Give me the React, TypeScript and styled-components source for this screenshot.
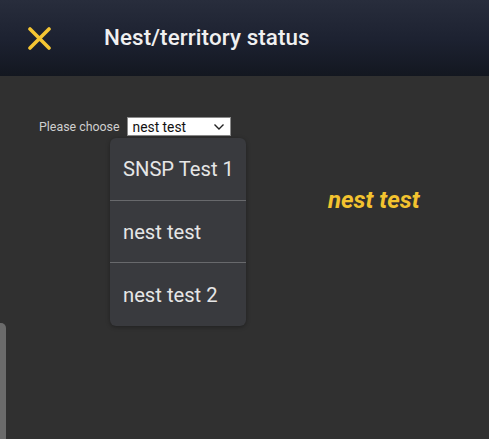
import React from "react";
import styled, { createGlobalStyle } from "styled-components";

const Global = createGlobalStyle`
  html, body { margin: 0; padding: 0; background: #303030; }
  body { font-family: Roboto, "Liberation Sans", sans-serif; }
  #root { min-height: 439px; }
`;

const Page = styled.div`
  position: relative;
  width: 489px;
  height: 439px;
  background: #303030;
  overflow: hidden;
`;

const Header = styled.header`
  height: 76px;
  display: flex;
  align-items: center;
  background: linear-gradient(180deg, #282d3c 0%, #1c2130 55%, #131720 100%);
  padding-left: 26px;
  box-sizing: border-box;
`;

const CloseButton = styled.button`
  width: 26px;
  height: 26px;
  padding: 0;
  border: 0;
  background: none;
  display: flex;
  align-items: center;
  justify-content: center;
`;

const Title = styled.h1`
  margin: -2px 0 0 52px;
  font-size: 22.4px;
  font-weight: 500;
  color: #f0f0f0;
  letter-spacing: 0.1px;
`;

const Body = styled.main`
  position: relative;
  padding: 41px 0 0 39px;
`;

const FormRow = styled.div`
  display: flex;
  align-items: center;
  gap: 7px;
  height: 19px;
`;

const Label = styled.span`
  font-size: 12.4px;
  color: #cfcfcf;
`;

const Select = styled.div`
  width: 104px;
  height: 19px;
  box-sizing: border-box;
  background: #ffffff;
  border: 1px solid #8a8a8a;
  display: flex;
  align-items: center;
  justify-content: space-between;
  padding: 0 5px 0 5px;
  font-size: 13.8px;
  color: #111;
`;

const Menu = styled.ul`
  position: absolute;
  left: 110px;
  top: 138px;
  width: 136px;
  margin: 0;
  padding: 0;
  list-style: none;
  background: #393a3e;
  border-radius: 6px;
  box-shadow: 0 1px 4px rgba(0, 0, 0, 0.35);
  z-index: 2;
`;

const MenuItem = styled.li<{ $last?: boolean }>`
  height: 62.7px;
  display: flex;
  align-items: center;
  padding-left: 13px;
  font-size: 20.2px;
  color: #e6e6e6;
  border-bottom: ${(p) => (p.$last ? "0" : "1.5px solid #68696c")};
  box-sizing: border-box;
`;

const Result = styled.div`
  margin-top: 51px;
  padding-left: 289px;
  font-size: 24px;
  font-weight: 700;
  font-style: italic;
  color: #f3c32f;
  line-height: 26px;
`;

const EdgeTab = styled.div`
  position: absolute;
  left: 0;
  top: 323px;
  width: 6px;
  height: 130px;
  background: #6b6b6b;
  border-top-right-radius: 5px;
`;

export default function App() {
  return (
    <Page>
      <Global />
      <Header>
        <CloseButton aria-label="close">
          <svg width="25" height="23" viewBox="0 0 25 23">
            <path d="M3 2 L22 21 M22 2 L3 21" stroke="#f5c633" strokeWidth="3.6" strokeLinecap="round" />
          </svg>
        </CloseButton>
        <Title>Nest/territory status</Title>
      </Header>
      <Body>
        <FormRow>
          <Label>Please choose</Label>
          <Select>
            <span>nest test</span>
            <svg width="12" height="8" viewBox="0 0 12 8">
              <path d="M1.5 1.5 L6 6 L10.5 1.5" stroke="#222" strokeWidth="1.4" fill="none" />
            </svg>
          </Select>
        </FormRow>
        <Result>nest test</Result>
      </Body>
      <Menu>
        <MenuItem>SNSP Test 1</MenuItem>
        <MenuItem>nest test</MenuItem>
        <MenuItem $last>nest test 2</MenuItem>
      </Menu>
      <EdgeTab />
    </Page>
  );
}
